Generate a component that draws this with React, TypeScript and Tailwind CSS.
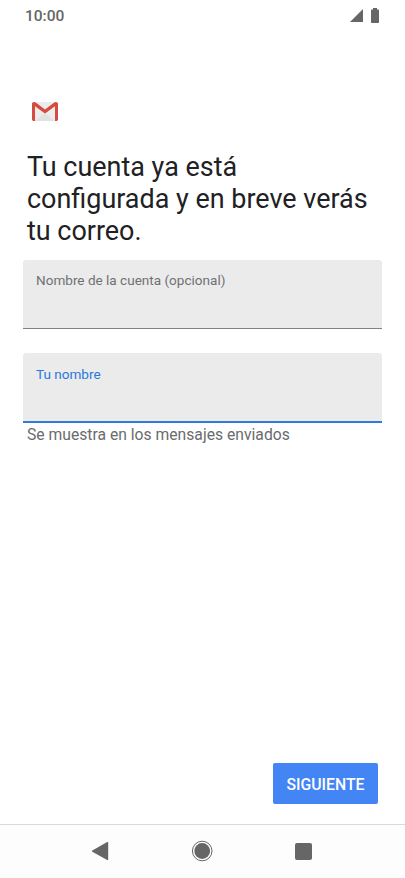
import { useState } from 'react';

interface FieldProps {
  id: string;
  label: string;
  active: boolean;
  value: string;
  onChange: (value: string) => void;
}

function Field({ id, label, active, value, onChange }: FieldProps) {
  return (
    <div
      className={`
        flex flex-col rounded-t-[3px] bg-[#ebebeb] px-[13px]
        ${active ? 'h-[70px] border-b-2 border-[#2f7ade]' : 'h-[69px] border-b border-[#828282]'}
      `}
    >
      <label
        htmlFor={id}
        className={`text-[13.55px] leading-4 ${active ? 'pt-[13px] text-[#2a78dc]' : 'pt-3 text-[#707174]'}`}
      >
        {label}
      </label>
      <input
        id={id}
        className="w-full flex-1 bg-transparent text-base text-[#202124] outline-none"
        value={value}
        onChange={(e) => onChange(e.target.value)}
      />
    </div>
  );
}

function StatusBar() {
  return (
    <header className="flex h-8 items-center justify-between pl-[25px] pr-[26px] text-[#666]">
      <span className="pt-px text-[15.5px] font-medium leading-[31px]">10:00</span>
      <div className="flex items-center gap-2 pb-px">
        <svg className="h-[13px] w-[13px]" viewBox="0 0 13 13" fill="currentColor">
          <path d="M13 0v13H0z" />
        </svg>
        <svg className="h-[15px] w-2" viewBox="0 0 8 15" fill="currentColor">
          <path d="M2 0h4v1.5h1.2c.5 0 .8.3.8.8v11.9c0 .5-.3.8-.8.8H.8c-.5 0-.8-.3-.8-.8V2.3c0-.5.3-.8.8-.8H2z" />
        </svg>
      </div>
    </header>
  );
}

function GmailLogo() {
  return (
    <svg className="h-[19px] w-[26px]" viewBox="0 0 26 19">
      <path d="M2 0h22c1.1 0 2 .8 2 1.8v15.4c0 1-.9 1.8-2 1.8H2c-1.1 0-2-.8-2-1.8V1.8C0 .8.9 0 2 0z" fill="#ececec" />
      <path d="M3 19l10-8 10 8z" fill="#e2e2e2" />
      <path
        d="M0 2C0 .8.9 0 2 0c.7 0 1.1.2 1.7.6L13 7.6 22.3.6C22.9.2 23.3 0 24 0c1.1 0 2 .8 2 2v15.2c0 1-.9 1.8-2 1.8h-1V4.2L13 11.500 3 4.200V19H2c-1.1 0-2-.8-2-1.800z"
        fill="#d54b3f"
      />
    </svg>
  );
}

function NavigationBar() {
  return (
    <nav className="flex h-[54px] items-start justify-between border-t border-[#dadada] bg-[#fdfdfd] pl-[91px] pr-[93px] pt-4 text-[#666]">
      <button aria-label="Atrás" className="flex h-5 items-center">
        <svg className="h-5 w-[18px]" viewBox="0 0 18 20" fill="currentColor">
          <path d="M16.2 1.1c.6-.3 1 0 1 .5v17c0 .5-.4.8-1 .5L1.3 10.700c-.5-.3-.5-.8 0-1.100z" />
        </svg>
      </button>
      <button aria-label="Inicio" className="flex h-5 items-center">
        <svg className="h-[22px] w-[22px]" viewBox="0 0 22 22">
          <circle cx="11.2" cy="11" r="9.8" fill="none" stroke="#666" strokeWidth="1" />
          <circle cx="11.2" cy="11" r="7.9" fill="#666" />
        </svg>
      </button>
      <button aria-label="Recientes" className="flex h-5 items-center">
        <span className="h-[17px] w-[17px] rounded-[2px] bg-[#666]" />
      </button>
    </nav>
  );
}

export default function App() {
  const [accountName, setAccountName] = useState('');
  const [name, setName] = useState('');

  return (
    <div className="flex h-[878px] w-[405px] flex-col overflow-hidden bg-white font-['Roboto',sans-serif]">
      <StatusBar />

      <main className="flex flex-1 flex-col px-[23px]">
        <div className="pl-[9px] pt-[70px]">
          <GmailLogo />
        </div>
        <h1 className="mt-[30px] pl-1 text-[26.95px] leading-8 text-[#212124]">
          Tu cuenta ya está
          <br />
          configurada y en breve verás
          <br />
          tu correo.
        </h1>

        <div className="mt-[13px] flex flex-col gap-6">
          <Field
            id="account"
            label="Nombre de la cuenta (opcional)"
            active={false}
            value={accountName}
            onChange={setAccountName}
          />
          <Field id="name" label="Tu nombre" active value={name} onChange={setName} />
        </div>
        <p className="mt-[2px] pl-1 text-[15.7px] leading-5 text-[#6a6b6e]">Se muestra en los mensajes enviados</p>

        <button className="mb-5 mr-1 mt-auto h-[41px] w-[105px] self-end rounded-[2px] bg-[#4385f5] pt-[2px] text-[15.8px] font-medium text-white">
          SIGUIENTE
        </button>
      </main>

      <NavigationBar />
    </div>
  );
}
